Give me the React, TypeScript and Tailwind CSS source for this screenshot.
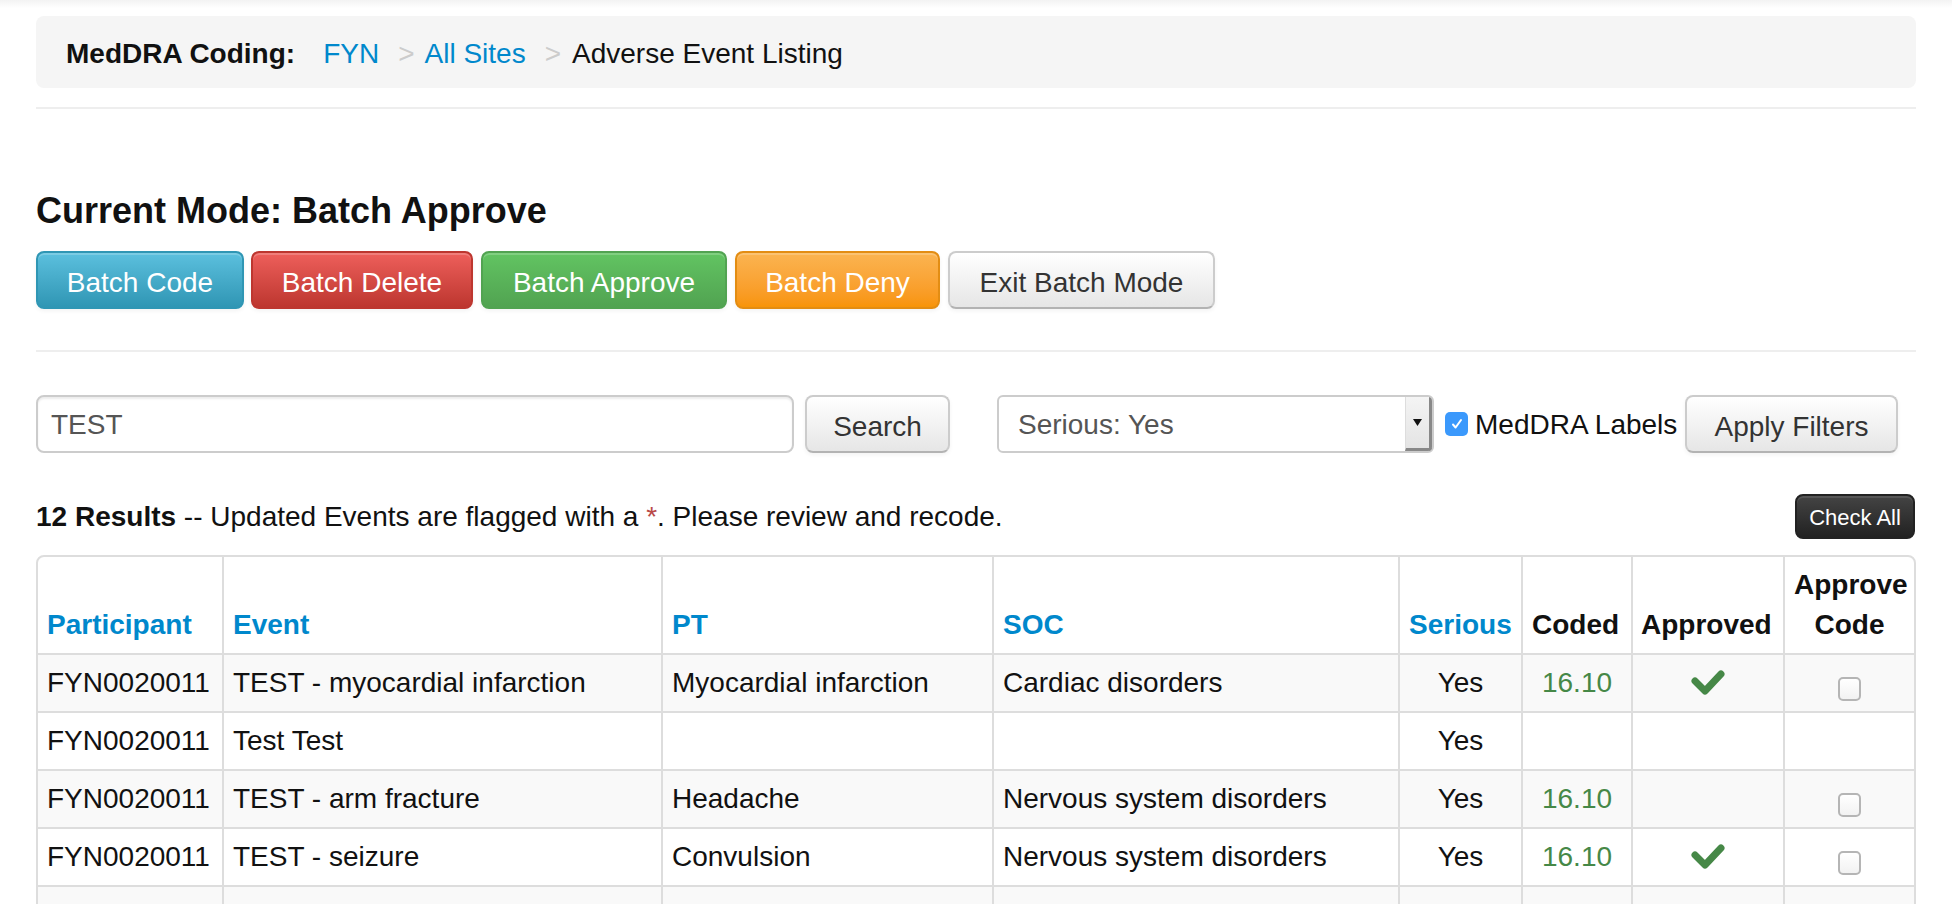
import { ReactNode } from 'react'

type Row = {
  participant: string
  event: string
  pt: string
  soc: string
  serious: string
  coded: string
  approved: boolean
  approvable: boolean
}

const rows: Row[] = [
  { participant: 'FYN0020011', event: 'TEST - myocardial infarction', pt: 'Myocardial infarction', soc: 'Cardiac disorders', serious: 'Yes', coded: '16.10', approved: true, approvable: true },
  { participant: 'FYN0020011', event: 'Test Test', pt: '', soc: '', serious: 'Yes', coded: '', approved: false, approvable: false },
  { participant: 'FYN0020011', event: 'TEST - arm fracture', pt: 'Headache', soc: 'Nervous system disorders', serious: 'Yes', coded: '16.10', approved: false, approvable: true },
  { participant: 'FYN0020011', event: 'TEST - seizure', pt: 'Convulsion', soc: 'Nervous system disorders', serious: 'Yes', coded: '16.10', approved: true, approvable: true },
  { participant: 'FYN0020011', event: 'TEST - pneumonia', pt: 'Pneumonia', soc: 'Infections and infestations', serious: 'Yes', coded: '16.10', approved: false, approvable: true },
  { participant: 'FYN0020011', event: 'TEST - syncope', pt: 'Syncope', soc: 'Nervous system disorders', serious: 'Yes', coded: '16.10', approved: false, approvable: true },
]

const cols = [184, 439, 331, 406, 123, 110, 152, 131]

function Btn({ className, children }: { className: string; children: ReactNode }) {
  return (
    <button
      className={`h-[58px] rounded-[8px] border-2 pt-[5px] text-[28px] leading-[40px] shadow-[inset_0_2px_0_rgba(255,255,255,0.2),0_2px_4px_rgba(0,0,0,0.05)] ${className}`}
    >
      {children}
    </button>
  )
}

function Check() {
  return (
    <svg width="36" height="28" viewBox="0 0 36 28" className="inline-block">
      <polyline
        points="5,12 15,22 31,5"
        fill="none"
        stroke="#468847"
        strokeWidth="7"
        strokeLinecap="round"
        strokeLinejoin="round"
      />
    </svg>
  )
}

function Box() {
  return (
    <span className="mt-[12px] inline-block h-[24px] w-[23px] rounded-[5px] border-2 border-[#b5b5b5] bg-linear-to-b from-white to-[#f2f2f2]" />
  )
}

const th = 'border-l-2 border-[#ddd] px-[9px] pt-[8px] pb-[8px] align-bottom font-bold leading-[40px] whitespace-nowrap first:border-l-0'
const td = 'border-t-2 border-l-2 border-[#ddd] px-[9px] py-[8px] leading-[40px] whitespace-nowrap first:border-l-0'

export default function App() {
  return (
    <div className="min-h-screen bg-white font-['Liberation_Sans',Arial,sans-serif] text-[28px] text-[#111]">
      <div className="h-[8px] bg-linear-to-b from-[#f3f3f3] to-white" />
      <div className="px-[36px] pt-[8px]">
        <div className="flex h-[72px] items-center rounded-[8px] bg-[#f5f5f5] px-[30px] pt-[4px] leading-[40px]">
          <strong className="mr-[28px]">MedDRA Coding:</strong>
          <a className="text-[#0088cc]">FYN</a>
          <span className="pl-[19px] pr-[10px] text-[#ccc]">&gt;</span>
          <a className="text-[#0088cc]">All Sites</a>
          <span className="pl-[19px] pr-[11px] text-[#ccc]">&gt;</span>
          <span>Adverse Event Listing</span>
        </div>

        <div className="mt-[19px] border-t-2 border-[#eee]" />

        <h4 className="mt-[82px] text-[36px] font-bold leading-[40px]">Current Mode: Batch Approve</h4>

        <div className="mt-[20px] flex gap-[6px]">
          <Btn className="w-[208px] border-[#2f96b4] bg-linear-to-b from-[#5bc0de] to-[#2f96b4] text-white">Batch Code</Btn>
          <Btn className="ml-[1px] w-[222px] border-[#bd362f] bg-linear-to-b from-[#ee5f5b] to-[#bd362f] text-white">Batch Delete</Btn>
          <Btn className="ml-[2px] w-[246px] border-[#51a351] bg-linear-to-b from-[#62c462] to-[#51a351] text-white">Batch Approve</Btn>
          <Btn className="ml-[2px] w-[205px] border-[#e38d13] bg-linear-to-b from-[#fbb450] to-[#f89406] text-white">Batch Deny</Btn>
          <Btn className="ml-[2px] w-[267px] border-[#ccc] border-b-[#b3b3b3] bg-linear-to-b from-white to-[#e6e6e6] text-[#333]">Exit Batch Mode</Btn>
        </div>

        <div className="mt-[41px] border-t-2 border-[#eee]" />

        <div className="mt-[43px] flex h-[58px] items-center">
          <div className="flex h-[58px] w-[758px] items-center rounded-[8px] border-2 border-[#ccc] pl-[13px] pt-[2px] text-[#555] shadow-[inset_0_2px_2px_rgba(0,0,0,0.075)]">
            TEST
          </div>
          <Btn className="ml-[11px] w-[145px] border-[#ccc] border-b-[#b3b3b3] bg-linear-to-b from-white to-[#e6e6e6] text-[#333]">Search</Btn>
          <div className="ml-[47px] flex h-[58px] w-[437px] overflow-hidden rounded-[6px] border-2 border-[#ccc] bg-white text-[#555]">
            <div className="flex flex-1 items-center pl-[19px] pt-[2px]">Serious: Yes</div>
            <div className="flex w-[27px] items-center justify-center border-l border-[#ddd] border-r-[3px] border-r-[#888] border-b-[3px] border-b-[#888] bg-linear-to-b from-[#f4f4f4] to-[#e4e4e4]">
              <svg width="9" height="7" viewBox="0 0 9 7"><path d="M0 0h9L4.5 7z" fill="#111" /></svg>
            </div>
          </div>
          <span className="ml-[11px] flex h-[24px] w-[23px] items-center justify-center rounded-[5px] bg-[#3b99fc]">
            <svg width="14" height="14" viewBox="0 0 14 14"><path d="M3 7.5l2.6 3L11 3" fill="none" stroke="white" strokeWidth="2" strokeLinecap="round" strokeLinejoin="round" /></svg>
          </span>
          <span className="ml-[7px] w-[210px] pt-[2px]">MedDRA Labels</span>
          <Btn className="w-[213px] border-[#ccc] border-b-[#b3b3b3] bg-linear-to-b from-white to-[#e6e6e6] text-[#333]">Apply Filters</Btn>
        </div>

        <div className="mt-[41px] flex h-[45px] items-center justify-between">
          <p className="leading-[40px]">
            <strong>12 Results</strong> -- Updated Events are flagged with a <span className="text-[#b94a48]">*</span>. Please review and recode.
          </p>
          <button className="mr-[1px] h-[45px] w-[120px] rounded-[8px] border-2 border-[#222] bg-linear-to-b from-[#444] to-[#222] pt-[2px] text-[22px] text-white shadow-[inset_0_2px_0_rgba(255,255,255,0.1)]">
            Check All
          </button>
        </div>

        <div className="mt-[16px] overflow-hidden rounded-[8px] border-2 border-[#ddd]">
          <table className="w-full table-fixed border-separate border-spacing-0">
            <colgroup>
              {cols.map((w, i) => (
                <col key={i} style={{ width: w }} />
              ))}
            </colgroup>
            <thead>
              <tr className="text-left">
                <th className={`${th} text-[#0088cc]`}>Participant</th>
                <th className={`${th} text-[#0088cc]`}>Event</th>
                <th className={`${th} text-[#0088cc]`}>PT</th>
                <th className={`${th} text-[#0088cc]`}>SOC</th>
                <th className={`${th} text-[#0088cc]`}>Serious</th>
                <th className={th}>Coded</th>
                <th className={`${th} pl-[8px]`}>Approved</th>
                <th className={`${th} px-[6px] text-center`}>
                  Approve
                  <br />
                  Code
                </th>
              </tr>
            </thead>
            <tbody>
              {rows.map((r, i) => (
                <tr key={i} className={i % 2 === 0 ? 'bg-[#f9f9f9]' : 'bg-white'}>
                  <td className={td}>{r.participant}</td>
                  <td className={td}>{r.event}</td>
                  <td className={td}>{r.pt}</td>
                  <td className={td}>{r.soc}</td>
                  <td className={`${td} text-center`}>{r.serious}</td>
                  <td className={`${td} text-center text-[#468847]`}>{r.coded}</td>
                  <td className={td}>
                    <div className="flex h-[40px] items-center justify-center">{r.approved && <Check />}</div>
                  </td>
                  <td className={td}>
                    <div className="flex h-[40px] items-center justify-center">{r.approvable && <Box />}</div>
                  </td>
                </tr>
              ))}
            </tbody>
          </table>
        </div>
      </div>
    </div>
  )
}
